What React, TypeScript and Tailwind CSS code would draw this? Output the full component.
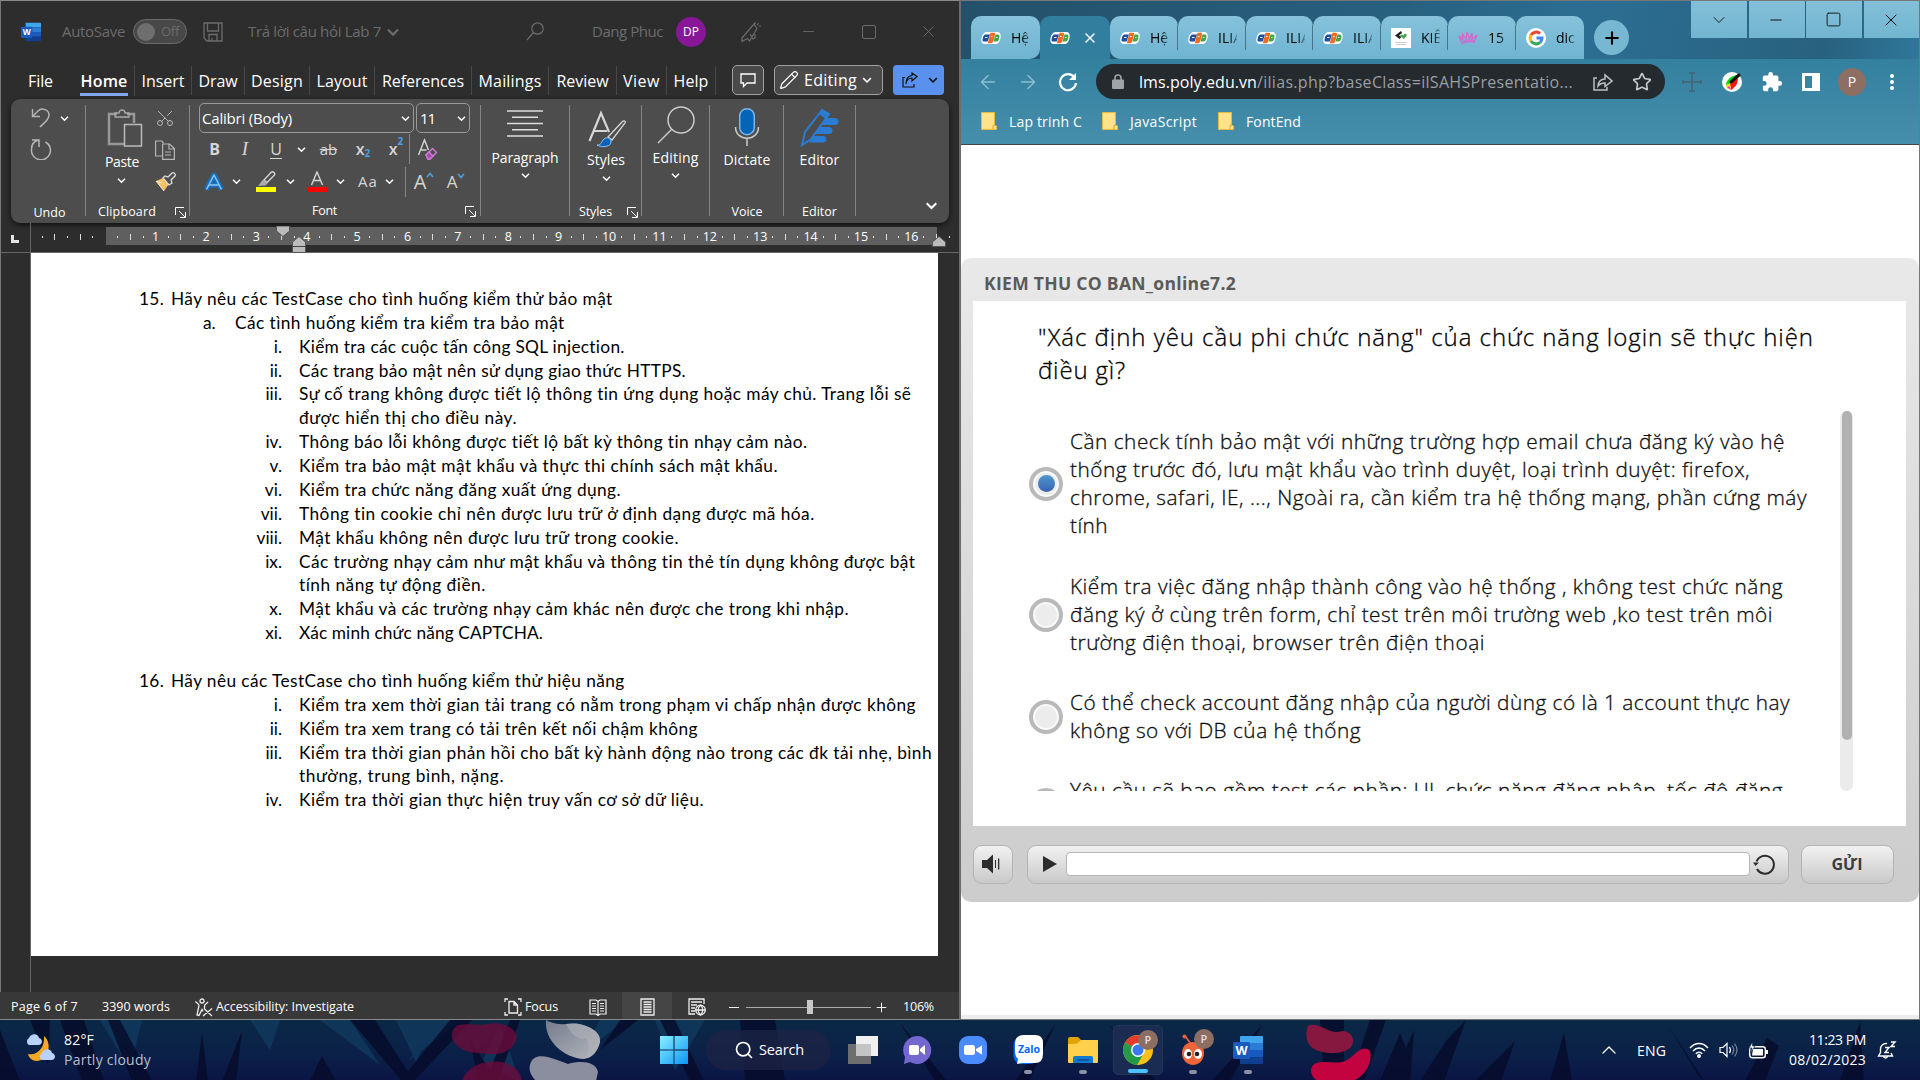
import React, { useLayoutEffect, useRef, useState } from "react";
import {
  ArrowLeft, ArrowRight, ChevronDown, ChevronUp, X, Minus, Square, Plus, Star, Search, Scissors, Pencil,
} from "lucide-react";

/** Text that spreads its letters so that the run takes exactly `w` pixels. */
function T({ w, c = "", children }: { w: number; c?: string; children: string }) {
  const ref = useRef<HTMLSpanElement>(null);
  const [gap, setGap] = useState(0);
  useLayoutEffect(() => {
    const el = ref.current;
    if (!el) return;
    el.style.letterSpacing = "0px";
    const natural = el.getBoundingClientRect().width;
    setGap((w - natural) / [...children].length);
    el.style.letterSpacing = `${(w - natural) / [...children].length}px`;
  }, [w, children]);
  return (
    <span ref={ref} className={`inline-block shrink-0 whitespace-pre ${c}`} style={{ letterSpacing: `${gap}px` }}>
      {children}
    </span>
  );
}

const Chev = ({ s = 11 }: { s?: number }) => (
  <svg width={s} height={s} viewBox="0 0 11 11" fill="none" stroke="currentColor" strokeWidth="1.5" className="shrink-0">
    <path d="M2 3.8l3.5 3.5L9 3.8" />
  </svg>
);

const WordLogo = ({ s }: { s: number }) => (
  <svg width={s} height={s} viewBox="0 0 30 30" className="shrink-0">
    <path d="M8 1h21a1 1 0 011 1v6H7V2a1 1 0 011-1z" fill="#41a5ee" />
    <path d="M7 8h23v7H7z" fill="#2b7cd3" />
    <path d="M7 15h23v7H7z" fill="#185abd" />
    <path d="M7 22h23v6a1 1 0 01-1 1H8a1 1 0 01-1-1z" fill="#103f91" />
    <rect x="0" y="7" width="17" height="17" rx="1.5" fill="#185abd" />
    <text x="8.5" y="20" textAnchor="middle" fontSize="12.5" fontWeight="700" fill="#fff" fontFamily="Open Sans, sans-serif">W</text>
  </svg>
);

const Launcher = () => (
  <svg width="11" height="11" viewBox="0 0 11 11" fill="none" stroke="#fff" className="shrink-0">
    <path d="M.5 8V.5H9M4 4l6 6M10.500 5v5.500H5" />
  </svg>
);

/* ---------- Word ---------- */

function TitleBar() {
  return (
    <div className="flex h-[61px] items-center text-[15px] text-[#6c6c6c]">
      <div className="ml-[21px]"><WordLogo s={20} /></div>
      <T w={63} c="ml-[21px]">AutoSave</T>
      <div className="ml-2 flex h-[25px] w-[54px] items-center rounded-full border border-[#6a6a6a] bg-[#484848]">
        <div className="ml-[3px] h-[18px] w-[18px] rounded-full bg-[#6e6e6e]" />
        <T w={18} c="ml-[6px] text-[13px]">Off</T>
      </div>
      <svg width="20" height="20" viewBox="0 0 20 20" fill="none" stroke="currentColor" strokeWidth="1.3" className="ml-4 shrink-0">
        <path d="M1 1h18v18H4l-3-3zM4.500 1v8h11V1M6 19v-6.500h8V19M9 16v3" />
      </svg>
      <T w={133} c="ml-[25px]">Trả lời câu hỏi Lab 7</T>
      <div className="ml-1 w-4"><Chev s={16} /></div>
      <svg width="18" height="19" viewBox="0 0 18 19" fill="none" stroke="currentColor" strokeWidth="1.200" className="ml-[125px] shrink-0">
        <circle cx="11.500" cy="6.500" r="5.700" /><path d="M7.500 10.500L1 18" />
      </svg>
      <T w={71} c="ml-[48px]">Dang Phuc</T>
      <div className="ml-[13px] flex h-[30px] w-[30px] items-center justify-center rounded-full bg-[#881798] text-[12px] text-white">DP</div>
      <svg width="22" height="22" viewBox="0 0 22 22" fill="none" stroke="currentColor" strokeWidth="1.200" className="ml-[34px] shrink-0">
        <path d="M2 17L14 3l3 4.500L9.500 20l-2-2.500L2 20.500zM10 13l3 5 2-1v-4M15 1v2M18.500 2L17 4M21 5h-2.500" />
      </svg>
      <Minus size={17} strokeWidth={1.200} className="ml-[38px]" />
      <div className="ml-[45px] h-[14px] w-[14px] rounded-[2px] border border-current" />
      <X size={19} strokeWidth={1.200} className="ml-[43px]" />
    </div>
  );
}

function MenuTab({ label, w, box }: { label: string; w: number; box: string }) {
  return (
    <div className={`flex h-[29px] items-center justify-center border-r border-[#474747] ${box}`}>
      <T w={w}>{label}</T>
    </div>
  );
}

function MenuBar() {
  return (
    <div className="flex h-[37px] items-start pt-[3px] text-[16px] text-white">
      <div className="ml-[28px] flex h-[32px] w-[52px] items-center"><T w={25}>File</T></div>
      <div className="flex h-[31px] w-[55px] border-r border-[#474747]">
        <div className="flex w-[48px] items-center justify-center border-b-[3px] border-[#83a7f0] pt-[3px] font-semibold"><T w={47}>Home</T></div>
      </div>
      <div className="flex pt-px">
        <MenuTab label="Insert" w={43} box="w-[57px]" />
        <MenuTab label="Draw" w={39} box="w-[53px]" />
        <MenuTab label="Design" w={52} box="w-[65px]" />
        <MenuTab label="Layout" w={51} box="w-[65px]" />
        <MenuTab label="References" w={82} box="w-[97px]" />
        <MenuTab label="Mailings" w={63} box="w-[77px]" />
        <MenuTab label="Review" w={52} box="w-[68px]" />
        <MenuTab label="View" w={37} box="w-[50px]" />
        <MenuTab label="Help" w={35} box="w-[49px]" />
      </div>
      <div className="ml-[16px] flex h-[30px] w-[32px] items-center justify-center rounded-[5px] border border-[#a0a0a0] bg-[#4a4a4a]">
        <svg width="16" height="15" viewBox="0 0 16 15" fill="none" stroke="currentColor" strokeWidth="1.300"><path d="M1 1h14v9H7l-3.500 3.500V10H1z" /></svg>
      </div>
      <div className="ml-[10px] flex h-[30px] w-[109px] items-center rounded-[5px] border border-[#a0a0a0] bg-[#4a4a4a] pl-1">
        <Pencil size={20} strokeWidth={1.500} />
        <T w={53} c="ml-[5px]">Editing</T>
        <div className="ml-1"><Chev s={12} /></div>
      </div>
      <div className="ml-[10px] flex h-[30px] w-[51px] items-center rounded-[4px] bg-[#5a91ee] pl-[9px] text-[#111]">
        <svg width="16" height="16" viewBox="0 0 16 16" fill="none" stroke="currentColor" strokeWidth="1.200">
          <path d="M3 5.500H1V15h11v-3M4 12c.5-4 2.500-6 6-6V9l5-4.500L10 1v2.500C6 3.800 4 7 4 12z" />
        </svg>
        <div className="ml-[9px]"><Chev s={12} /></div>
      </div>
    </div>
  );
}

const Sep = () => <div className="mt-[6px] h-[111px] w-px shrink-0 bg-[#858585]" />;

function FontGroup() {
  return (
    <div className="flex w-[290px] flex-col pl-[9px]">
      <div className="mt-1 flex gap-[2px] text-[15px]">
        <div className="flex h-[30px] w-[215px] items-center justify-between rounded-[5px] border border-[#999] pr-[2px] pl-[2px]">
          <T w={90}>Calibri (Body)</T><Chev />
        </div>
        <div className="flex h-[30px] w-[54px] items-center justify-between rounded-[5px] border border-[#999] pr-[2px] pl-[3px]">
          <T w={15}>11</T><Chev />
        </div>
      </div>
      <div className="mt-[1px] flex h-[30px] items-center text-[15px] text-[#d6d6d6] [&>div]:shrink-0">
        <div className="flex w-[31px] justify-center text-[16px] font-bold">B</div>
        <div className="flex w-[30px] justify-center font-['Liberation_Serif',serif] text-[19px] italic">I</div>
        <div className="flex w-[32px] justify-center"><span className="border-b border-current text-[16px] leading-[18px]">U</span></div>
        <div className="flex w-[18px] justify-center text-white"><Chev /></div>
        <div className="flex w-[37px] justify-center line-through">ab</div>
        <div className="flex w-[32px] justify-center text-[16px] font-semibold">x<span className="mt-[9px] text-[10px] font-bold text-[#4aa0e0]">2</span></div>
        <div className="flex w-[30px] justify-center pl-[4px] text-[16px] font-semibold">x<span className="-mt-[3px] text-[10px] font-bold text-[#4aa0e0]">2</span></div>
        <div className="h-[30px] w-px bg-[#858585]" />
        <div className="flex w-[35px] justify-center">
          <svg width="22" height="22" viewBox="0 0 22 22" fill="none" stroke="#d6d6d6" strokeWidth="1.400">
            <path d="M1.500 17L7.500 2l4 10M3.500 12h6" /><path d="M9 17l6.500-6.500 4 4L13 21H11z" stroke="#d07ad8" /><path d="M9 17l3-3 4 4-3 3h-2z" fill="#a04fae" stroke="#d07ad8" />
          </svg>
        </div>
      </div>
      <div className="mt-[2px] flex h-[31px] items-center text-white [&>div]:shrink-0">
        <div className="flex w-[30px] justify-center">
          <svg width="20" height="20" viewBox="0 0 20 20" fill="none" strokeLinejoin="round">
            <path d="M2.500 17.500L10 3l7.500 14.500M5.500 13h9" stroke="#1472c4" strokeWidth="5" />
            <path d="M2.500 17.500L10 3l7.500 14.500M5.500 13h9" stroke="#8cc3ee" strokeWidth="1.500" />
          </svg>
        </div>
        <div className="flex w-[14px] justify-center"><Chev /></div>
        <div className="flex w-[45px] justify-center">
          <svg width="20" height="21" viewBox="0 0 20 21">
            <path d="M0 16h20v5H0z" fill="#ff0" />
            <path d="M8 9l7-7.500a2 2 0 013 3L11 11.500z" fill="none" stroke="#d6d6d6" strokeWidth="1.300" /><path d="M7 8.500l4.500 4-2 2L2 15z" fill="#aaa" />
          </svg>
        </div>
        <div className="flex w-[4px] justify-center"><Chev /></div>
        <div className="ml-[10px] flex w-[30px] justify-center">
          <svg width="20" height="21" viewBox="0 0 20 21">
            <path d="M0 16h20v5H0z" fill="red" /><path d="M4.500 14L10 1l5.500 13M6.500 9.500h7" fill="none" stroke="#d6d6d6" strokeWidth="1.400" />
          </svg>
        </div>
        <div className="flex w-[16px] justify-center"><Chev /></div>
        <div className="ml-[4px] flex w-[32px] justify-center text-[15px] text-[#d6d6d6]"><T w={20}>Aa</T></div>
        <div className="flex w-[10px] justify-center"><Chev /></div>
        <div className="ml-[11px] h-[30px] w-px bg-[#858585]" />
        <div className="flex w-[36px] justify-center text-[20px] leading-none text-[#d6d6d6]">A
          <svg width="8" height="6" viewBox="0 0 8 6" className="shrink-0"><path d="M1 5l3-3.500L7 5" fill="none" stroke="#4aa0e0" strokeWidth="1.600" /></svg>
        </div>
        <div className="flex w-[28px] justify-center text-[17px] leading-none text-[#d6d6d6]">A
          <svg width="8" height="6" viewBox="0 0 8 6" className="shrink-0"><path d="M1 1l3 3.500L7 1" fill="none" stroke="#4aa0e0" strokeWidth="1.600" /></svg>
        </div>
      </div>
      <div className="mt-[5px] flex h-[18px] items-center text-[12.500px]">
        <T w={25} c="ml-[113px]">Font</T>
        <div className="ml-[128px]"><Launcher /></div>
      </div>
    </div>
  );
}

function BigTool({ box, icon, label, w, top, chev, foot, footW }: {
  box: string; icon: React.ReactNode; label: string; w: number; top: string; chev?: boolean; foot?: string; footW?: number;
}) {
  return (
    <div className={`flex flex-col items-center ${box}`}>
      <div className="flex h-[50px] items-center">{icon}</div>
      <div className={`flex h-[18px] items-center text-[14px] ${top}`}><T w={w}>{label}</T></div>
      <div className="mt-[4px] h-[11px]">{chev && <Chev />}</div>
      <div className="mt-auto mb-[2px] flex h-[18px] items-center text-[12.500px]">
        {foot && <T w={footW ?? 30}>{foot}</T>}
      </div>
    </div>
  );
}

function Ribbon() {
  return (
    <div className="mx-[11px] flex h-[124px] w-[938px] rounded-[9px] bg-[#4d4d4d] text-white shadow-[0_2px_5px_#111]">
      <div className="flex w-[74px] flex-col">
        <div className="mt-[7px] flex h-[24px] items-center pl-[20px]">
          <svg width="20" height="22" viewBox="0 0 20 22" fill="none" stroke="#b5b5b5" strokeWidth="1.500">
            <path d="M1.500 2v7.500H9M2 9L7 4c4-4 11-1 11 4 0 5-5 8-9 12" />
          </svg>
          <div className="ml-[8px]"><Chev /></div>
        </div>
        <div className="mt-[8px] h-[24px] pl-[19px]">
          <svg width="22" height="22" viewBox="0 0 22 22" fill="none" stroke="#b5b5b5" strokeWidth="1.500">
            <path d="M2 2h7v7M9 2C4 3 1.500 7 1.500 11.500a9.500 9.500 0 1014-7.500" />
          </svg>
        </div>
        <div className="mt-auto mb-px flex h-[18px] justify-center pl-[3px] text-[12.500px]"><T w={32}>Undo</T></div>
      </div>
      <Sep />
      <div className="flex w-[103px] flex-col">
        <div className="flex h-[102px]">
          <div className="flex w-[72px] flex-col items-center">
            <svg width="36" height="38" viewBox="0 0 36 38" fill="none" className="mt-[10px] ml-[5px]">
              <path d="M10 5H2v30h15M20 5h7v9" stroke="#999" strokeWidth="2.500" />
              <path d="M8 8V4h4c0-4 6-4 6 0h4v4z" stroke="#aaa" strokeWidth="1.300" /><path d="M17.500 15.500h17V37h-17z" fill="#4d4d4d" stroke="#bbb" strokeWidth="1.500" />
            </svg>
            <div className="mt-[5px] flex h-[18px] items-center text-[14px]"><T w={34}>Paste</T></div>
            <div className="mt-[5px] -ml-[2px]"><Chev /></div>
          </div>
          <div className="-ml-[4px] flex flex-col items-center text-[#b5b5b5]">
            <Scissors size={20} strokeWidth={1.200} className="mt-[9px] -rotate-90" />
            <svg width="20" height="20" viewBox="0 0 20 20" fill="none" stroke="#b5b5b5" strokeWidth="1.200" className="mt-[12px]">
              <path d="M7 16H.6V1h6l2 2M7.600 4h7l4.800 4.500v10.900H7.600zM14 4v5h5M10 12h6M10 15h6" />
            </svg>
            <svg width="22" height="20" viewBox="0 0 22 20" className="mt-[12px]">
              <path d="M2 9l7-3 6 6-5 7z" fill="#f3c063" /><path d="M3 9l3 2 2-1M2 9l8 10" stroke="#fff3d0" fill="none" />
              <path d="M9 6l2-2 3 1 4-4c2-1 4 1 3 3l-4 4 1 3-3 2z" fill="#4d4d4d" stroke="#ddd" strokeWidth="1.300" />
            </svg>
          </div>
        </div>
        <div className="mt-auto mb-[2px] flex h-[18px] items-center text-[12.500px]">
          <T w={58} c="ml-[12px]">Clipboard</T><div className="ml-[19px]"><Launcher /></div>
        </div>
      </div>
      <Sep />
      <FontGroup />
      <Sep />
      <BigTool box="w-[88px]" top="mt-[-1px]" label="Paragraph" w={67} chev icon={
        <svg width="36" height="28" viewBox="0 0 36 28" stroke="#ddd" strokeWidth="1.500"><path d="M0 1h36M5 7.300h26M0 13.500h36M5 19.700h26M0 26h36" /></svg>
      } />
      <Sep />
      <div className="flex w-[71px] flex-col items-center pl-px">
        <svg width="38" height="38" viewBox="0 0 38 38" fill="none" className="mt-[11px] ml-[2px]">
          <path d="M1.500 31L13 3l8 19M6 21h13" stroke="#d6d6d6" strokeWidth="2.200" />
          <path d="M20 27L34 12c2-2 4-1 3 1L24 30z" stroke="#d6d6d6" strokeWidth="1.300" /><path d="M9 35c4 0 4-2 6-5s7-3 8 1c1 6-9 7-14 4z" fill="#0a63b8" stroke="#8cc3ee" />
        </svg>
        <div className="mt-[2px] flex h-[18px] items-center text-[14px]"><T w={38}>Styles</T></div>
        <div className="mt-[5px]"><Chev /></div>
        <div className="mt-auto mb-[2px] flex h-[18px] w-full items-center text-[12.500px]"><T w={33} c="ml-[8px]">Styles</T><div className="ml-[15px]"><Launcher /></div></div>
      </div>
      <Sep />
      <BigTool box="w-[67px]" top="mt-[-1px]" label="Editing" w={46} chev icon={
        <svg width="38" height="38" viewBox="0 0 38 38" fill="none" stroke="#ccc" strokeWidth="1.500" className="mt-[2px]"><circle cx="24" cy="14" r="13" /><path d="M15 23L1 37" /></svg>
      } />
      <Sep />
      <BigTool box="w-[73px] pl-px" top="mt-[1px]" label="Dictate" w={47} foot="Voice" footW={31} icon={
        <svg width="26" height="40" viewBox="0 0 26 40" fill="none" className="mt-[6px]">
          <rect x="5.700" y="1.700" width="14.600" height="26" rx="7.300" fill="#0563b8" stroke="#7ab6ea" strokeWidth="1.500" /><path d="M1.500 20c0 15 23 15 23 0M13 32v7" stroke="#ccc" strokeWidth="1.500" />
        </svg>
      } />
      <Sep />
      <BigTool box="w-[71px]" top="mt-[1px]" label="Editor" w={40} foot="Editor" footW={35} icon={
        <svg width="40" height="40" viewBox="0 0 40 40" fill="none" className="mt-[6px]">
          <path d="M2 38l3-13L22 3l7 4-18 25z" stroke="#2b7cd3" strokeWidth="2" /><path d="M22 2l8 5-4 5-7-5z" fill="#2b7cd3" />
          <path d="M26 11h9a3.500 3.500 0 010 7H21zM20 20h9a3.500 3.500 0 010 7H15zM14 29h9a3.300 3.300 0 010 6.600H9z" fill="#2b7cd3" />
        </svg>
      } />
      <Sep />
      <div className="flex flex-1 items-end justify-end pr-[10px] pb-[10px]"><Chev s={15} /></div>
    </div>
  );
}

function Ruler() {
  return (
    <div className="flex h-[30px] border-b border-[#666]">
      <div className="flex w-[31px] items-end justify-end border-r border-[#666] pr-[11px] pb-[9px]">
        <div className="h-[8px] w-[8px] border-b-[3px] border-l-[3px] border-[#e5e5e5]" />
      </div>
      <div className="relative mt-[4px] flex h-[18px] w-[923px] items-center bg-[linear-gradient(to_right,transparent_75px,#5f5f5f_75px,#5f5f5f_906px,transparent_906px)] pt-[2px] pl-[5px] text-[12.500px] text-white">
        {Array.from({ length: 73 }, (_, k) => {
          const v = k - 5;
          return (
            <div key={k} className="flex w-[12.600px] shrink-0 items-center justify-center">
              {v === 0 ? null : v > 0 && v % 4 === 0 ? <span>{v / 4}</span> : v % 2 === 0
                ? <i className="h-[6px] w-px bg-[#ddd]" /> : <i className="h-[2px] w-px bg-[#ddd]" />}
            </div>
          );
        })}
        <svg width="14" height="11" viewBox="0 0 14 11" className="absolute top-[-1px] left-[245px]"><path d="M.5 0h13v5L7 10.500.5 5z" fill="#bbb" stroke="#555" /></svg>
        <svg width="14" height="17" viewBox="0 0 14 17" className="absolute top-[9px] left-[261px]"><path d="M.5 16.500V6L7 .5 13.500 6v10.500z" fill="#bbb" stroke="#555" /><path d="M0 10.500h14" stroke="#444" /></svg>
        <svg width="14" height="11" viewBox="0 0 14 11" className="absolute top-[9px] left-[901px]"><path d="M.5 10.500V6L7 .5 13.500 6v4.500z" fill="#bbb" stroke="#555" /></svg>
      </div>
    </div>
  );
}

type Line = [kind: "n" | "a" | "r" | "", marker: string, text: string, w: number];
const LINES: Line[] = [
  ["n", "15.", "Hãy nêu các TestCase cho tình huống kiểm thử bảo mật", 442],
  ["a", "a.", "Các tình huống kiểm tra kiểm tra bảo mật", 330],
  ["r", "i.", "Kiểm tra các cuộc tấn công SQL injection.", 326],
  ["r", "ii.", "Các trang bảo mật nên sử dụng giao thức HTTPS.", 387],
  ["r", "iii.", "Sự cố trang không được tiết lộ thông tin ứng dụng hoặc máy chủ. Trang lỗi sẽ", 613],
  ["r", "", "được hiển thị cho điều này.", 218],
  ["r", "iv.", "Thông báo lỗi không được tiết lộ bất kỳ thông tin nhạy cảm nào.", 509],
  ["r", "v.", "Kiểm tra bảo mật mật khẩu và thực thi chính sách mật khẩu.", 479],
  ["r", "vi.", "Kiểm tra chức năng đăng xuất ứng dụng.", 322],
  ["r", "vii.", "Thông tin cookie chỉ nên được lưu trữ ở định dạng được mã hóa.", 516],
  ["r", "viii.", "Mật khẩu không nên được lưu trữ trong cookie.", 380],
  ["r", "ix.", "Các trường nhạy cảm như mật khẩu và thông tin thẻ tín dụng không được bật", 617],
  ["r", "", "tính năng tự động điền.", 187],
  ["r", "x.", "Mật khẩu và các trường nhạy cảm khác nên được che trong khi nhập.", 550],
  ["r", "xi.", "Xác minh chức năng CAPTCHA.", 244],
  ["", "", "", 0],
  ["n", "16.", "Hãy nêu các TestCase cho tình huống kiểm thử hiệu năng", 454],
  ["r", "i.", "Kiểm tra xem thời gian tải trang có nằm trong phạm vi chấp nhận được không", 617],
  ["r", "ii.", "Kiểm tra xem trang có tải trên kết nối chậm không", 399],
  ["r", "iii.", "Kiểm tra thời gian phản hồi cho bất kỳ hành động nào trong các đk tải nhẹ, bình", 633],
  ["r", "", "thường, trung bình, nặng.", 205],
  ["r", "iv.", "Kiểm tra thời gian thực hiện truy vấn cơ sở dữ liệu.", 405],
];

function Page() {
  return (
    <div className="h-[703px] w-[907px] bg-white pt-[34px] font-[Lato,'Open_Sans',sans-serif] text-[17.300px] text-black">
      {LINES.map(([kind, marker, text, w], i) => (
        <div key={i} className="flex h-[23.880px] items-center">
          {kind === "n" && <div className="w-[140px] pl-[108px]"><T w={25}>{marker}</T></div>}
          {kind === "a" && <div className="w-[204px] pl-[172px]">{marker}</div>}
          {kind === "r" && <div className="w-[268px] pr-[17px] text-right">{marker}</div>}
          {text && <T w={w}>{text}</T>}
        </div>
      ))}
    </div>
  );
}

function StatusBar() {
  return (
    <div className="flex h-[27px] items-center bg-[#383838] pt-[3px] text-[12.500px] text-white [&>*]:shrink-0">
      <T w={67} c="ml-[11px]">Page 6 of 7</T>
      <T w={68} c="ml-[24px]">3390 words</T>
      <svg width="19" height="19" viewBox="0 0 19 19" fill="none" stroke="#eee" strokeWidth="1.300" className="ml-[24px]">
        <circle cx="8" cy="3" r="2" /><path d="M1.500 3.500c2 2.500 3.500 2 3.500 4L3 17l2 .5 3-6 1 2M14 4c-2 2.500-3.500 2-3.500 4v3M10 10.500l8 7.500M18 10.500L9 18" />
      </svg>
      <T w={138} c="ml-[3px]">Accessibility: Investigate</T>
      <svg width="18" height="18" viewBox="0 0 18 18" fill="none" stroke="#eee" strokeWidth="1.300" className="ml-[150px]">
        <path d="M4 1H1v3M14 1h3v3M1 14v3h3M17 14v3h-3M5 3.500h5l3.500 3.500v8H5zM10 3.500V7h3.500" />
      </svg>
      <T w={33} c="ml-[3px]">Focus</T>
      <svg width="18" height="17" viewBox="0 0 18 17" fill="none" stroke="#eee" strokeWidth="1.200" className="ml-[31px]">
        <path d="M1 1h6l2 1.500L11 1h6v14h-6l-2 1.500L7 15H1zM9 2v14M3 4.500h4M3 7h4M3 9.500h4M3 12h4M11 4.500h4M11 7h4M11 9.500h4M11 12h4" />
      </svg>
      <div className="-mt-[3px] ml-[15px] flex h-[27px] w-[50px] items-center justify-center bg-[#454545] pt-[2px]">
        <svg width="15" height="18" viewBox="0 0 15 18" fill="none" stroke="#eee" strokeWidth="1.300"><path d="M1 1h13v16H1zM3.500 4h8M3.500 6.500h8M3.500 9h8M3.500 11.500h8M3.500 14h8" /></svg>
      </div>
      <svg width="18" height="18" viewBox="0 0 18 18" fill="none" stroke="#eee" strokeWidth="1.300" className="ml-[16px]">
        <path d="M7 16H1V1h15v5M3 4h11M3 7h6M3 10h4M3 13h4" /><circle cx="12.500" cy="12" r="4.800" /><path d="M8 12h9M12.500 7c-3 3-3 7 0 10 3-3 3-7 0-10" />
      </svg>
      <div className="ml-[23px] h-px w-[10px] bg-[#eee]" />
      <div className="ml-[7px] flex w-[125px] items-center">
        <div className="h-px w-[61px] bg-[#aaa]" /><div className="h-[14px] w-[6px] bg-[#c8c8c8]" /><div className="h-px flex-1 bg-[#aaa]" />
      </div>
      <Plus size={15} strokeWidth={1.500} className="ml-[3px]" />
      <T w={31} c="ml-[14px]">106%</T>
    </div>
  );
}

/* ---------- Browser ---------- */

const Fpt = () => (
  <svg width="20" height="14" viewBox="0 0 20 14" className="shrink-0">
    <path d="M5 1h12q3.500 1 2.500 6-1 5-4 6H3q-3.500-1-2.500-6Q1.500 2 5 1z" fill="#fff" />
    <path d="M4.500 3.500H9l-2.300 7H2.500q-1.500 0-.7-3.500t2.700-3.500z" fill="#1f4fa0" /><path d="M9.500 1.800h3.500q1.500 0 1 2l-1.800 6.400q-.5 2-2 2H6.800z" fill="#f26a21" /><path d="M14.500 3.500h2.500q2 0 1.300 3.500t-2.600 3.500h-3.200z" fill="#43a646" />
    <path d="M4 6.500h2.500M10 5.500h1.500M15 6.500h1.500" stroke="#fff" />
  </svg>
);
const Google = ({ s = 20 }: { s?: number }) => (
  <svg width={s} height={s} viewBox="0 0 20 20" className="shrink-0">
    <circle cx="10" cy="10" r="10" fill="#fff" />
    <g fill="none" strokeWidth="3"><path d="M5 7a6 6 0 019-1.500" stroke="#ea4335" /><path d="M5 13a6 6 0 010-6" stroke="#fbbc05" /><path d="M14 14.500A6 6 0 015 13" stroke="#34a853" /><path d="M10.500 10H16c0 2-.8 3.500-2 4.500" stroke="#4285f4" /></g>
  </svg>
);
const Cowell = () => (
  <svg width="20" height="20" viewBox="0 0 20 20" className="shrink-0">
    <path d="M0 0h20v20H0z" fill="#fff" /><path d="M10 3L4 7.500 8.500 11l2-2-2.500-1.500L11 5z" fill="#222" /><path d="M9 8l4 3 3-4-2-1.500-2 2-1.500-1z" fill="#3da545" /><path d="M4 14.500h12M5 16.500h10" stroke="#ccc" />
  </svg>
);
const Crown = () => (
  <svg width="20" height="14" viewBox="0 0 20 14" fill="none" stroke="#d765cc" strokeWidth="1.300" className="shrink-0"><path d="M4 12.500L1 5l4 4-.5-6L8 8l1-7 2.500 7L14 2v6.500L19 4l-3 7.500c-4-1.500-8-1-12 1zM5 10.500c4-2 7-2 10.500-1" /></svg>
);

function Tab({ box, icon, text, last }: { box: string; icon: React.ReactNode; text: string; last?: boolean }) {
  return (
    <div className={`flex h-[43px] items-center rounded-t-[10px] bg-gradient-to-b from-[#86c2da] to-[#6fb4d2] ${box}`}>
      <div className="ml-[10px] flex w-[20px] justify-center">{icon}</div>
      <span className="ml-[10px] w-[19px] overflow-hidden bg-gradient-to-r from-black from-50% to-[#5a8ea6] bg-clip-text text-[14px] whitespace-nowrap text-transparent">{text}</span>
      {!last && <div className="ml-auto h-[25px] w-px bg-[#47768a]" />}
    </div>
  );
}

function Folder({ label, w, c }: { label: string; w: number; c: string }) {
  return (
    <div className={`flex items-center ${c}`}>
      <svg width="16" height="18" viewBox="0 0 16 18" className="shrink-0">
        <path d="M.5.500h13v12.500l2 1v3.500H.5z" fill="#ffe289" stroke="#e8b93c" /><path d="M12 17v-3.500l2-.5" fill="none" stroke="#d8a72c" />
      </svg>
      <T w={w} c="ml-[12px]">{label}</T>
    </div>
  );
}

function BrowserChrome() {
  const box = "flex h-[37px] items-center justify-center bg-gradient-to-b from-[#84bfd8] to-[#72b5d1]";
  return (
    <div className="h-[144px] border-b border-[#444] bg-[#3d87a5] font-['Open_Sans',sans-serif]">
      <div className="flex h-[58px] items-end bg-[linear-gradient(100deg,#24506a,#28607f_45%,#2c6e92_65%,#28617f_90%,#30779a)]">
        <div className="flex pl-[10px]">
          <Tab box="w-[69px] rounded-br-[10px]" icon={<Fpt />} text="Hệ" last />
          <div className="flex h-[43px] w-[70px] items-center rounded-t-[10px] bg-[#327e9f] text-white">
            <div className="ml-[10px]"><Fpt /></div>
            <X size={16} strokeWidth={2.200} className="ml-[12px]" />
          </div>
          <Tab box="w-[68px] rounded-bl-[10px]" icon={<Fpt />} text="Hệ" />
          <Tab box="w-[68px]" icon={<Fpt />} text="ILIAS" />
          <Tab box="w-[67px]" icon={<Fpt />} text="ILIAS" />
          <Tab box="w-[68px]" icon={<Fpt />} text="ILIAS" />
          <Tab box="w-[67px]" icon={<Cowell />} text="KIẾM" />
          <Tab box="w-[68px]" icon={<Crown />} text="15" />
          <Tab box="w-[68px]" icon={<Google />} text="dich" last />
        </div>
        <div className="mb-[4px] ml-[10px] flex h-[35px] w-[35px] items-center justify-center rounded-full bg-[#78b7d2] text-black"><Plus size={20} strokeWidth={2.500} /></div>
        <div className="ml-auto flex self-start text-[#111]">
          <div className={`w-[56px] ${box}`}><ChevronDown size={20} strokeWidth={1.100} /></div>
          <div className={`ml-[2px] w-[56px] pr-[3px] ${box}`}><Minus size={18} strokeWidth={1.300} /></div>
          <div className={`ml-px w-[56px] pr-[2px] ${box}`}><Square size={17} strokeWidth={1.300} /></div>
          <div className={`ml-[2px] w-[55px] pr-[2px] ${box}`}><X size={20} strokeWidth={1.200} /></div>
        </div>
      </div>
      <div className="h-[85px] bg-gradient-to-b from-[#33809f] to-[#468fac] pt-[5px]">
        <div className="flex h-[35px] items-center text-white [&>*]:shrink-0">
          <ArrowLeft size={22} strokeWidth={1.500} className="ml-[16px] text-[#8fbdd0]" />
          <ArrowRight size={22} strokeWidth={1.500} className="ml-[18px] text-[#8fbdd0]" />
          <svg width="20" height="20" viewBox="0 0 20 20" fill="none" stroke="#fff" strokeWidth="2.200" className="ml-[19px]"><path d="M16.500 5.500A8 8 0 1018 11" /><path d="M18 1v7h-7z" fill="#fff" stroke="none" /></svg>
          <div className="ml-[18px] flex h-[35px] w-[569px] items-center rounded-full bg-[#242a2e] [&>*]:shrink-0">
            <svg width="12" height="16" viewBox="0 0 12 16" className="ml-[16px]"><rect x="0" y="5.500" width="12" height="9.500" rx="1" fill="#a0a3a8" /><path d="M3 6V4a3 3 0 016 0v2" fill="none" stroke="#a0a3a8" strokeWidth="1.600" /></svg>
            <div className="ml-[15px] flex text-[16px]"><T w={118}>lms.poly.edu.vn</T><T w={316} c="text-[#9a9fa3]">/ilias.php?baseClass=ilSAHSPresentatio...</T></div>
            <svg width="20" height="18" viewBox="0 0 20 18" fill="none" stroke="#bbc0c4" strokeWidth="1.500" className="ml-[20px]"><path d="M4 5H1v12h13v-3M5 13c.5-5 3-7 7-7V2l7 6-7 5.500V10c-3 0-5 .5-7 3z" /></svg>
            <Star size={20} strokeWidth={2} className="ml-[19px] text-[#c5c9cc]" />
          </div>
          <svg width="20" height="20" viewBox="0 0 20 20" fill="none" stroke="#456473" strokeWidth="1.500" className="ml-[17px]"><path d="M10 0v20M0 10h20M7 1h6M7 19h6M1 8v4M19 8v4" /></svg>
          <svg width="20" height="20" viewBox="0 0 20 20" className="ml-[20px]"><circle cx="10" cy="10" r="10" fill="#fff" /><path d="M4 13C4 8 9 4 15 3c0 4-4 8-11 10z" fill="#0d1" /><path d="M8 12l7-8c2 5 0 10-6 14z" fill="#f11" /><path d="M4 13l4-1 1 6c-3-1-5-2-5-5z" fill="#fd0" /><path d="M5 15c2-1 3-1 4 3z" fill="#f2f" /><path d="M9 10l8-7" stroke="#111" strokeWidth="3" strokeLinecap="round" /></svg>
          <svg width="22" height="22" viewBox="0 0 24 24" fill="#fff" className="ml-[19px]"><path d="M20.500 11H19V7a2 2 0 00-2-2h-4V3.500a2.500 2.500 0 00-5 0V5H4a2 2 0 00-2 2v3.800h1.500a2.700 2.700 0 010 5.400H2V20a2 2 0 002 2h3.800v-1.500a2.700 2.700 0 015.400 0V22H17a2 2 0 002-2v-4h1.500a2.500 2.500 0 000-5z" /></svg>
          <div className="ml-[19px] flex h-[18px] w-[18px] justify-end border-[3px] border-white bg-transparent"><div className="w-[5px] bg-white" /></div>
          <div className="ml-[18px] flex h-[28px] w-[28px] items-center justify-center rounded-full bg-[#8d6e63] text-[14px]">P</div>
          <div className="ml-[24px] flex flex-col gap-[2px]"><i className="h-1 w-1 rounded-full bg-white" /><i className="h-1 w-1 rounded-full bg-white" /><i className="h-1 w-1 rounded-full bg-white" /></div>
        </div>
        <div className="mt-[13px] flex h-[18px] items-center text-[14px] text-white">
          <Folder label="Lap trinh C" w={73} c="ml-[20px]" />
          <Folder label="JavaScript" w={67} c="ml-[20px]" />
          <Folder label="FontEnd" w={55} c="ml-[21px]" />
        </div>
      </div>
    </div>
  );
}

function Radio({ on, c }: { on?: boolean; c: string }) {
  return (
    <div className={`flex h-[34px] w-[34px] shrink-0 items-center justify-center rounded-full border-[4px] border-[#b9b9b9] bg-[#ececec] shadow-[inset_0_0_0_2px_#fafafa] ${c}`}>
      {on && <div className="h-[17px] w-[17px] rounded-full bg-gradient-to-b from-[#4f98cc] to-[#3a62b4]" />}
    </div>
  );
}

function Answer({ on, c, r, lines }: { on?: boolean; c: string; r: string; lines: [string, number][] }) {
  return (
    <div className={`flex items-start ${c}`}>
      <Radio on={on} c={r} />
      <div className="ml-[7px]">
        {lines.map(([t, w]) => <div key={t} className="h-[28.300px] leading-[28.300px]"><T w={w}>{t}</T></div>)}
      </div>
    </div>
  );
}

function Quiz() {
  const btn = "flex h-[39px] items-center rounded-[9px] border border-[#b3b3b3] bg-gradient-to-b from-[#f2f2f2] to-[#c9c9c9]";
  return (
    <div className="mt-[113px] flex h-[644px] w-[958px] flex-col rounded-[10px] bg-gradient-to-b from-[#e9e9e9] to-[#cccccc] px-[12px] font-['Open_Sans',sans-serif]">
      <div className="flex h-[43px] items-center pt-[8px] pl-[11px] text-[17.500px] font-bold text-[#5a5a5a]"><T w={252}>KIEM THU CO BAN_online7.2</T></div>
      <div className="h-[525px] w-[933px] bg-white font-light text-black [-webkit-text-stroke:0.3px_currentColor]">
        <div className="pt-[19px] pl-[65px] text-[24px] leading-[33px]">
          <div><T w={776}>"Xác định yêu cầu phi chức năng" của chức năng login sẽ thực hiện</T></div>
          <div><T w={88}>điều gì?</T></div>
        </div>
        <div className="mt-[25px] flex h-[380px] overflow-hidden text-[20.800px] text-[#0c0c0c]">
          <div className="w-[867px] pl-[56px]">
            <Answer on c="mt-[15.500px]" r="mt-[40px]" lines={[
              ["Cần check tính bảo mật với những trường hợp email chưa đăng ký vào hệ", 715],
              ["thống trước đó, lưu mật khẩu vào trình duyệt, loại trình duyệt: firefox,", 680],
              ["chrome, safari, IE, ..., Ngoài ra, cần kiểm tra hệ thống mạng, phần cứng máy", 737],
              ["tính", 38],
            ]} />
            <Answer c="mt-[32px]" r="mt-[26px]" lines={[
              ["Kiểm tra việc đăng nhập thành công vào hệ thống , không test chức năng", 713],
              ["đăng ký ở cùng trên form, chỉ test trên môi trường web ,ko test trên môi", 703],
              ["trường điện thoại, browser trên điện thoại", 415],
            ]} />
            <Answer c="mt-[31px]" r="mt-[12px]" lines={[
              ["Có thể check account đăng nhập của người dùng có là 1 account thực hay", 720],
              ["không so với DB của hệ thống", 291],
            ]} />
            <Answer c="mt-[32px]" r="mt-[12px]" lines={[["Yêu cầu sẽ bao gồm test các phần: UI, chức năng đăng nhập, tốc độ đăng", 713]]} />
          </div>
          <div className="h-[380px] w-[13px] rounded-full bg-[#ebebeb]"><div className="mx-auto h-[329px] w-[10px] rounded-full bg-[#b1b1b1]" /></div>
        </div>
      </div>
      <div className="mt-[19px] flex">
        <div className={`${btn} w-[40px] justify-center pr-[4px] pb-[2px]`}>
          <svg width="20" height="20" viewBox="0 0 20 20" fill="#2d2d2d"><path d="M1 6h5l6-5.500v19L6 14H1zM14 6h1v8h-1zM17 4.500h1.300v11H17z" /></svg>
        </div>
        <div className={`${btn} ml-[14px] w-[762px] pb-[2px]`}>
          <svg width="14" height="16" viewBox="0 0 14 16" className="ml-[15px]"><path d="M0 0l14 8-14 8z" fill="#2d2d2d" /></svg>
          <div className="ml-[9px] h-[24px] w-[684px] rounded-[4px] border border-[#b5b5b5] bg-white" />
          <svg width="22" height="22" viewBox="0 0 22 22" fill="none" stroke="#2d2d2d" strokeWidth="2" className="ml-[3px]"><path d="M3.500 8.500A9 9 0 1 1 4 16" /><path d="M0 9.500h6L2.500 13z" fill="#2d2d2d" stroke="none" /></svg>
        </div>
        <div className={`${btn} ml-[12px] w-[93px] justify-center pr-px pb-[2px] text-[16px] font-bold text-[#3c3c3c]`}><T w={31}>GỬI</T></div>
      </div>
    </div>
  );
}

/* ---------- Taskbar ---------- */

function Wallpaper() {
  return (
    <svg className="absolute inset-0" width="1920" height="61" viewBox="0 0 1920 61" preserveAspectRatio="none">
      <defs><linearGradient id="sky" x1="0" y1="0" x2="0" y2="1"><stop offset="0" stopColor="#0b2846" /><stop offset=".6" stopColor="#0b2048" /><stop offset="1" stopColor="#0a1444" /></linearGradient>
        <linearGradient id="grey" x1="0" y1="0" x2="1" y2="1"><stop offset="0" stopColor="#747b8c" /><stop offset="1" stopColor="#b4b6bd" /></linearGradient></defs>
      <path d="M0 0h1920v61H0z" fill="url(#sky)" />
      <g fill="#123f63" opacity=".65"><path d="M320 0l60 45-30-45zM396 0l20 42 20-42zM430 0l-20 40 50-40zM600 0l-20 36 45-36zM100 0l30 50 12-50zM250 0l20 30 10-30zM655 0l20 50 30-50zM480 45l20-40 20 56z" /></g>
      <g fill="#070c2b" opacity=".85"><path d="M0 10l20 51H0zM60 0l22 61h22L84 0zM108 0l24 61h20L120 0zM30 0l18 45L50 0zM196 61l6-48 6 48zM222 61l20-50-6 50zM350 0l52 61h12L375 0zM450 0L400 61h14L472 0zM470 20l8 41h20L520 0h-10L490 50zM310 61l12-25 14 25zM620 0l-20 30 38-30zM660 0l30 61h14L675 0zM740 0h35l10 61h-40zM900 3l35 58h12zM1055 5l-40 56h14zM1110 5l30 56h16zM1262 5l-50 56h18zM1320 0h24v61h-20zM1370 0h16l-22 61h-14zM1380 61l20-48 6 15 8-18-4 51zM1420 61l26-40 20-21-22 61zM1475 61l40-40-14 40zM1550 61l14-48 8 48zM1668 5l30 50 6 6zM1745 61l22-43 12 8-14 35zM1840 61l20-59 4 59z" /></g>
      <g opacity=".8"><path d="M453 10c6-10 22-3 35-6 18-4 32 8 28 16-5 14-20 16-35 13-16 1-34-10-28-23zM462 61c8-26 58-26 60 0z" fill="#6c0b39" /></g>
      <path d="M546 0c4 2 10 5 20 4 16-3 36 6 34 18-2 9-8 16-16 17-20-1-40-18-38-39z" fill="url(#grey)" /><path d="M530 45c4-16 24-6 38-1 14-4 28-2 30 8l-2 9h-60q-8-8-6-16z" fill="#8b8e9f" /><path d="M566 4c16-3 36 6 34 18-2 9-8 16-13 16 2-8 2-16-1-20-8 4-16-6-20-14z" fill="#b2b3b9" opacity=".6" />
      <path d="M1308 6c10-6 22 10 34 5 10 0 14 10 9 16-8 8-24 7-32 4-14-4-14-18-11-25z" fill="#86173f" /><path d="M1311 50c2-14 24-4 34-9 10-4 16-18 25-10 4 16-12 32-24 31h-26c-6-2-9-7-9-12z" fill="#c2033f" />
    </svg>
  );
}

function App24({ box, bar = "h-[4px] w-[8px] bg-[#8a8fa3]", p, children }: { box: string; bar?: string; p?: boolean; children: React.ReactNode }) {
  return (
    <div className={`relative flex h-[50px] shrink-0 items-center justify-center ${box}`}>
      {children}
      {p && <div className="absolute top-[4px] right-[4px] flex h-[20px] w-[20px] items-center justify-center rounded-full bg-[#8d6e63] text-[11px] font-semibold text-[#e8dcd8]">P</div>}
      <div className={`absolute bottom-px rounded-full ${bar}`} />
    </div>
  );
}

function Taskbar() {
  return (
    <div className="relative h-[60px] overflow-hidden bg-[#0b1d44] font-['Open_Sans',sans-serif] text-white">
      <Wallpaper />
      <div className="relative flex h-[60px] items-center [&>*]:shrink-0">
        <svg width="31" height="30" viewBox="0 0 31 30" className="-mt-[4px] ml-[25px]">
          <path d="M19 3c8 6 6 24-7 25-5 0-8-3-9-7 10 2 17-7 16-18z" fill="#f7a824" />
          <path d="M4 12a4 4 0 010-7c2-5 9-5 10 0 4 1 4 6 0 7zM17 27a4 4 0 010-7c2-5 9-5 10 0 4 1 4 6 0 7z" fill="#b9d2fb" />
        </svg>
        <div className="ml-[8px] flex w-[87px] flex-col items-start text-[14px] leading-[20px]"><T w={30}>82°F</T><T w={87} c="text-[#b8bfd0]">Partly cloudy</T></div>
        <svg width="30" height="30" viewBox="0 0 30 30" className="ml-[508px]"><defs><linearGradient id="win" x1="0" y1="0" x2="1" y2="1"><stop offset="0" stopColor="#8af0ff" /><stop offset="1" stopColor="#0c94f5" /></linearGradient></defs><path d="M1 1h13.500v13.500H1zM15.500 1H29v13.500H15.500zM1 15.500h13.500V29H1zM15.500 15.500H29V29H15.500z" fill="url(#win)" /></svg>
        <div className="ml-[17px] flex h-[40px] w-[125px] items-center rounded-full bg-[#1c2345]/80 pl-[28px]"><Search size={20} strokeWidth={2} /><T w={45} c="ml-[5px] text-[14.500px]">Search</T></div>
        <svg width="30" height="28" viewBox="0 0 30 28" className="ml-[17px]"><path d="M0 8h23v20H0z" fill="#6e6e6e" /><path d="M8 0h22v20H8z" fill="#f0f0f0" /><path d="M8 8h15v12H8z" fill="#c4c4c4" /></svg>
        <svg width="30" height="30" viewBox="0 0 30 30" className="ml-[24px]"><path d="M15 1a14 14 0 11-7 26l-6 2 1-7A14 14 0 0115 1z" fill="#7467cf" /><rect x="7" y="10" width="10" height="10" rx="2" fill="#fff" /><path d="M18 14l5-4v10l-5-4z" fill="#fff" /></svg>
        <svg width="30" height="30" viewBox="0 0 30 30" className="ml-[26px]"><rect x="1" y="1" width="28" height="28" rx="9" fill="#4a8cff" /><rect x="6" y="10" width="11" height="10" rx="2.500" fill="#fff" /><path d="M18 14l6-3.500v9L18 16z" fill="#fff" /></svg>
        <App24 box="ml-[15px] w-[50px]">
          <svg width="30" height="30" viewBox="0 0 30 30"><rect x=".5" y="2" width="24" height="27" rx="8" fill="#0068ff" /><path d="M11 0h11q8 0 8 8v11q0 9-8 9H9l-5 1 1-5q-3-3-3-8V9q0-9 9-9z" fill="#fff" /><text x="16" y="18" textAnchor="middle" fontSize="10.500" fontWeight="700" fill="#0068ff" fontFamily="Open Sans, sans-serif">Zalo</text></svg>
        </App24>
        <App24 box="ml-[5px] w-[50px]">
          <svg width="30" height="28" viewBox="0 0 30 28"><path d="M0 3q0-2 2-2h8l3 3v6H0z" fill="#e2a200" /><path d="M0 8q5 0 9-.5L13 4h17v22a1 1 0 01-1 1H1a1 1 0 01-1-1z" fill="#ffd04b" /><path d="M5 27v-5q0-2 2-2h16q2 0 2 2v5z" fill="#1079cf" /><path d="M9 24h12" stroke="#0a4d94" strokeWidth="1.500" /></svg>
        </App24>
        <App24 box="ml-[5px] w-[50px] rounded-[5px] border border-[#24355a] bg-[#1b2c52]" bar="h-[4px] w-[20px] bg-[#4cc2ff]" p>
          <svg width="30" height="30" viewBox="0 0 30 30"><circle cx="15" cy="15" r="15" fill="#fbc116" /><path d="M15 15L2 7.500A15 15 0 0128 8H15z" fill="#e33b2e" /><path d="M15 15L2 7.500A15 15 0 0014 30l7-12z" fill="#229a48" /><circle cx="15" cy="15" r="7" fill="#fff" /><circle cx="15" cy="15" r="5.500" fill="#3a7af0" /></svg>
        </App24>
        <App24 box="ml-[5px] w-[50px]" p>
          <svg width="26" height="32" viewBox="0 0 26 32"><path d="M11 10L5 2" stroke="#f0643c" strokeWidth="1.500" /><circle cx="4.500" cy="2.500" r="2" fill="#f0643c" /><path d="M13 8c7 0 11 5 11 11 0 7-5 12-11 12S2 26 2 19C2 13 6 8 13 8z" fill="#f0643c" /><ellipse cx="8" cy="20" rx="4" ry="5" fill="#fff" /><ellipse cx="18" cy="20" rx="4" ry="5" fill="#fff" /><circle cx="9" cy="20" r="2.300" fill="#222" /><circle cx="17" cy="20" r="2.300" fill="#222" /></svg>
        </App24>
        <App24 box="ml-[5px] w-[50px]"><WordLogo s={30} /></App24>
        <ChevronUp size={24} strokeWidth={1.300} className="ml-[324px]" />
        <T w={29} c="ml-[16px] text-[14px]">ENG</T>
        <svg width="20" height="16" viewBox="0 0 20 16" fill="none" stroke="#fff" strokeWidth="1.500" className="ml-[23px]"><path d="M1 6c5-6 13-6 18 0M4 9c3.500-4 8.500-4 12 0M6.800 11.800c2-2 4.400-2 6.400 0" /><circle cx="10" cy="14" r="1.200" fill="#fff" /></svg>
        <svg width="20" height="16" viewBox="0 0 20 16" fill="none" stroke="#fff" strokeWidth="1.200" className="ml-[10px]"><path d="M1 5.500h3L8 1.500v13l-4-4H1zM10.500 5q2 3 0 6" /><path d="M13 3.500q3.500 4.500 0 9M15.500 1.500q5 6.500 0 13" opacity=".45" /></svg>
        <svg width="21" height="17" viewBox="0 0 21 17" className="ml-[9px]"><rect x="1.700" y="4.700" width="15.600" height="11" rx="2.500" fill="none" stroke="#fff" strokeWidth="1.400" /><path d="M5 7h10v6.500H4zM18 8h2v4h-2z" fill="#fff" /><path d="M4.500 0L1 6h3L2.500 11 7 4H4.500z" fill="#fff" stroke="#0b2046" strokeWidth=".6" /></svg>
        <div className="ml-[20px] flex w-[77px] flex-col items-end text-[14px] leading-[20px]"><T w={57}>11:23 PM</T><T w={77}>08/02/2023</T></div>
        <svg width="20" height="19" viewBox="0 0 20 19" fill="none" stroke="#fff" strokeWidth="1.400" className="ml-[11px]"><path d="M10 2.500C6 2 3.500 5 3.500 8v3.500L1.500 15h14l-1.500-3M6.500 15.500q2 3 4 0M8 6.500h4l-4 5h4M14 1h4l-4 4.500h4" /></svg>
      </div>
    </div>
  );
}

export default function App() {
  return (
    <div className="flex h-[1080px] w-[1920px] flex-col overflow-hidden bg-[#2d2d2d]">
      <div className="flex h-[1020px]">
        <div className="flex w-[961px] shrink-0 flex-col border-t border-r-2 border-b border-l border-t-[#8a8a8a] border-r-[#6c6c6c] border-b-[#8a8a8a] border-l-[#777] bg-[#2d2d2d] font-['Open_Sans','Noto_Sans',sans-serif]">
          <div className="-ml-px flex w-[959px] flex-1 flex-col overflow-hidden">
            <TitleBar />
            <MenuBar />
            <Ribbon />
            <Ruler />
            <div className="flex flex-1">
              <div className="w-[31px] shrink-0 border-r border-[#666]" />
              <Page />
            </div>
            <StatusBar />
          </div>
        </div>
        <div className="flex w-[959px] flex-col border-t border-r border-b border-t-[#777] border-r-[#777] border-b-[#777] bg-white">
          <BrowserChrome />
          <Quiz />
          <div className="mt-auto h-[4px] bg-[#ececec]" />
        </div>
      </div>
      <Taskbar />
    </div>
  );
}
